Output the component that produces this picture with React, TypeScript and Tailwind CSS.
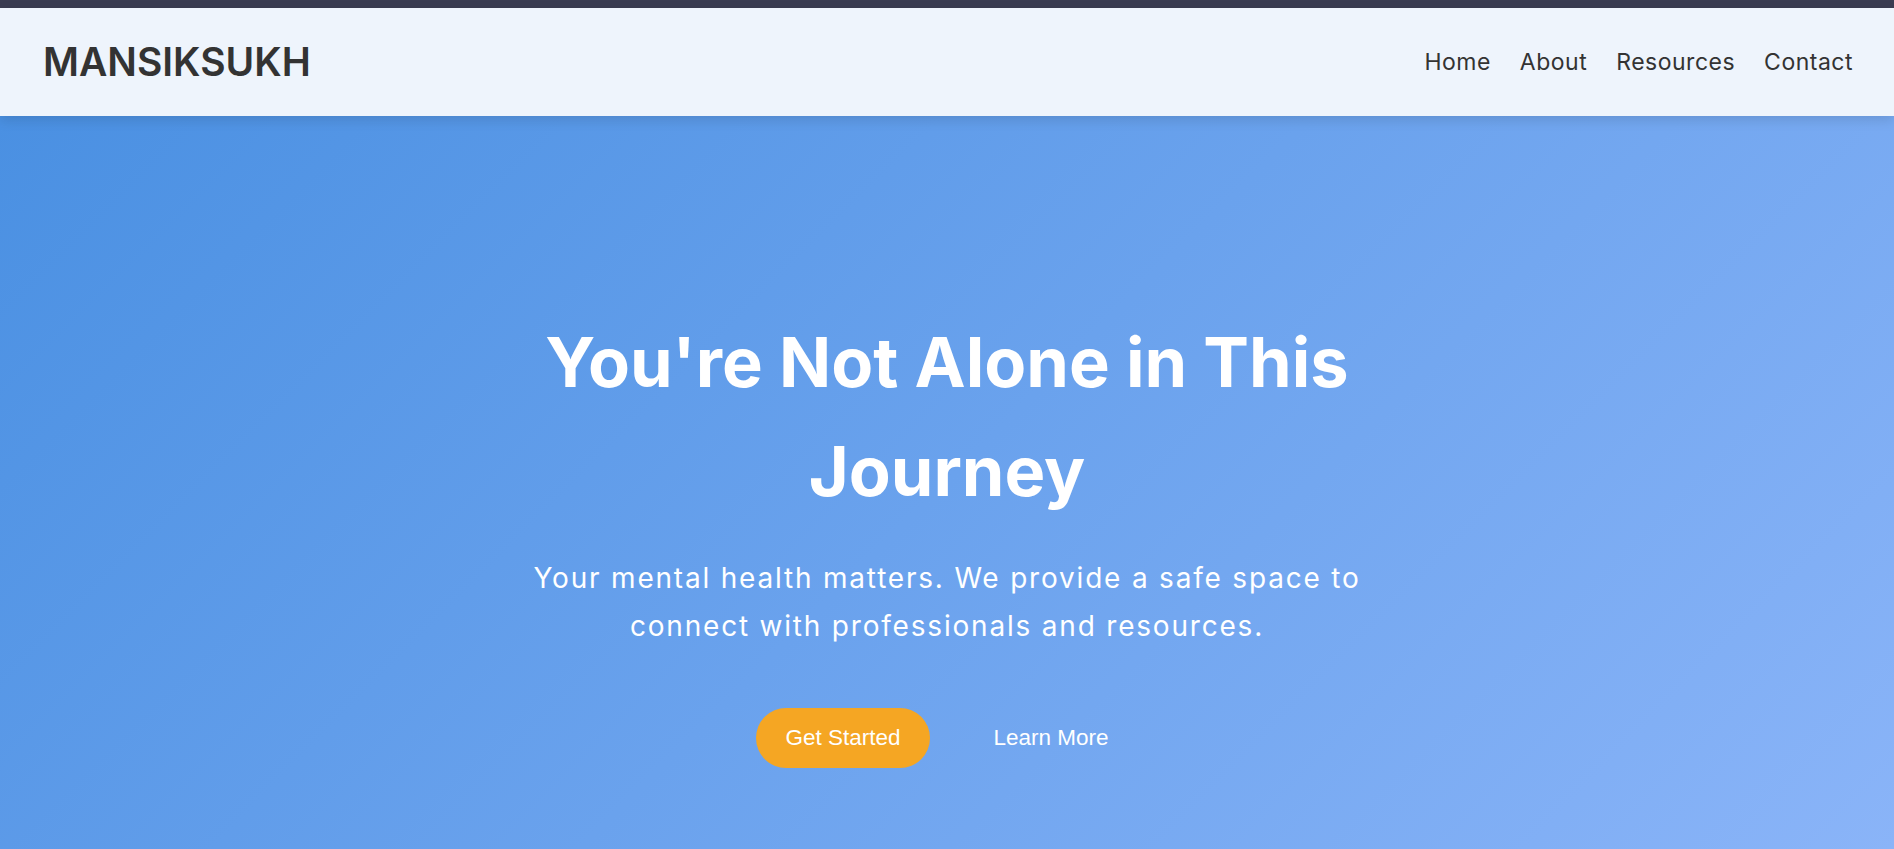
export default function App() {
  const links = ["Home", "About", "Resources", "Contact"];

  return (
    <div className="min-h-screen bg-[#5d9be6] font-['Inter',sans-serif]">
      <div className="h-2 bg-[#3a3c52]" />

      <header className="relative z-10 flex h-[108px] items-center justify-between bg-[#eef4fc] pl-[43px] pr-[41px] shadow-[0_4px_12px_rgba(0,0,0,0.12)]">
        <h1 className="text-[39px] font-semibold text-[#333333]">MANSIKSUKH</h1>
        <nav className="flex gap-[29px] text-[23px] tracking-[0.5px] text-[#333333]">
          {links.map((l) => (
            <a key={l} href="#" className="hover:text-[#4a90e2]">
              {l}
            </a>
          ))}
        </nav>
      </header>

      <section className="flex h-[733px] flex-col items-center bg-[linear-gradient(135deg,#4a90e2_0%,#8ab4f8_100%)] pt-[192px] text-center text-white">
        <h2 className="text-[68.5px] font-bold leading-[109px]">
          You're Not Alone in This
          <br />
          Journey
        </h2>
        <p className="mt-[28px] text-[28px] leading-[48px] tracking-[1.8px]">
          Your mental health matters. We provide a safe space to
          <br />
          connect with professionals and resources.
        </p>
        <div className="mt-[58px] flex items-center gap-[35px] font-['Liberation_Sans',sans-serif] text-[22.5px]">
          <button className="h-[60px] rounded-full bg-[#f5a623] px-[29px] text-white">Get Started</button>
          <button className="h-[60px] rounded-full px-[29px] text-white">Learn More</button>
        </div>
      </section>
    </div>
  );
}
